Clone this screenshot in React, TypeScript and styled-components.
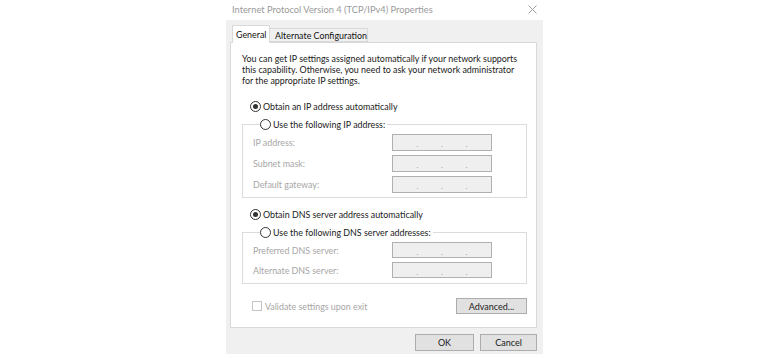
import React from "react";
import styled, { createGlobalStyle } from "styled-components";

const Global = createGlobalStyle`
  html, body { margin: 0; padding: 0; background: #ffffff; }
  body { font-family: Lato, "Noto Sans", sans-serif; font-size: 8.9px; color: #1a1a1a; }
  * { box-sizing: border-box; }
`;

const Window = styled.div`
  width: 317px;
  height: 354px;
  margin-left: 226px;
  display: flex;
  flex-direction: column;
  background: #f0f0f0;
`;

const TitleBar = styled.div`
  height: 20px;
  background: #ffffff;
  display: flex;
  align-items: center;
  justify-content: space-between;
  padding: 0 6px 2px 6px;
`;

const Title = styled.span`
  color: #9a9a9a;
  font-size: 9.3px;
  white-space: nowrap;
`;

const Body = styled.div`
  flex: 1;
  display: flex;
  flex-direction: column;
  padding: 5px 6px 0 4px;
`;

const TabStrip = styled.div`
  height: 17px;
  display: flex;
  align-items: flex-end;
  padding-left: 2px;
`;

const Tab = styled.div<{ $active?: boolean }>`
  height: ${(p) => (p.$active ? "18px" : "14px")};
  margin-bottom: ${(p) => (p.$active ? "-1px" : "0")};
  position: relative;
  z-index: ${(p) => (p.$active ? 1 : 0)};
  width: ${(p) => (p.$active ? "38px" : "98px")};
  background: ${(p) => (p.$active ? "#ffffff" : "#f0f0f0")};
  border: 1px solid #d9d9d9;
  border-bottom: ${(p) => (p.$active ? "none" : "1px solid #d9d9d9")};
  border-left: ${(p) => (p.$active ? "1px solid #d9d9d9" : "none")};
  display: flex;
  align-items: center;
  padding-left: ${(p) => (p.$active ? "3px" : "5px")};
  padding-bottom: ${(p) => (p.$active ? "1px" : "0")};
  white-space: nowrap;
  color: #111;
`;

const Panel = styled.div`
  height: 286px;
  background: #ffffff;
  border: 1px solid #d9d9d9;
  display: flex;
  flex-direction: column;
  padding: 10px 9px 0 11px;
`;

const Intro = styled.p`
  margin: 0;
  line-height: 11px;
  white-space: nowrap;
  color: #1a1a1a;
`;

const RadioRow = styled.label<{ $top: number }>`
  display: flex;
  align-items: center;
  height: 13px;
  margin-top: ${(p) => p.$top}px;
  padding-left: 8px;
  white-space: nowrap;
  color: #1a1a1a;
`;

const RadioDot = styled.span<{ $checked?: boolean }>`
  width: 11px;
  height: 11px;
  border-radius: 50%;
  border: 1px solid #333333;
  background: #ffffff;
  display: inline-flex;
  align-items: center;
  justify-content: center;
  margin-right: 2px;
  flex-shrink: 0;
  &::after {
    content: "";
    display: ${(p) => (p.$checked ? "block" : "none")};
    width: 5px;
    height: 5px;
    border-radius: 50%;
    background: #333333;
  }
`;

const Group = styled.fieldset<{ $top: number; $bottom: number }>`
  margin: ${(p) => p.$top}px 0 0 0;
  padding: 3px 0 ${(p) => p.$bottom}px 10px;
  border: 1px solid #dcdcdc;
  min-width: 0;
  width: 285px;
  display: flex;
  flex-direction: column;
  gap: 4px;
`;

const Legend = styled.legend`
  padding: 0 2px 0 0;
  margin-left: 7px;
  height: 13px;
  display: flex;
  align-items: center;
  white-space: nowrap;
  color: #1a1a1a;
`;

const FieldRow = styled.div<{ $h: number }>`
  display: grid;
  grid-template-columns: 139px 100px;
  align-items: center;
  height: ${(p) => p.$h}px;
`;

const FieldLabel = styled.span`
  color: #a6a6a6;
  white-space: nowrap;
`;

const IpBox = styled.div`
  height: 100%;
  border: 1px solid #b0b0b0;
  background: #efefef;
  display: flex;
  justify-content: center;
  align-items: center;
  gap: 21.5px;
  padding-top: 3px;
`;

const IpDot = styled.span`
  width: 3px;
  text-align: center;
  color: #9a9a9a;
  font-size: 8px;
  line-height: 8px;
`;

const BottomRow = styled.div`
  display: flex;
  justify-content: space-between;
  align-items: center;
  margin-top: 14px;
  height: 16px;
`;

const CheckRow = styled.label`
  display: flex;
  align-items: center;
  gap: 3px;
  padding-left: 10px;
  color: #a6a6a6;
  white-space: nowrap;
`;

const CheckBox = styled.span`
  width: 10px;
  height: 10px;
  border: 1px solid #c4c4c4;
  background: #ffffff;
`;

const Button = styled.button<{ $w: number; $h: number }>`
  width: ${(p) => p.$w}px;
  height: ${(p) => p.$h}px;
  background: #e1e1e1;
  border: 1px solid #adadad;
  font-family: inherit;
  font-size: 9px;
  color: #1a1a1a;
  padding: 0;
  display: flex;
  align-items: center;
  justify-content: center;
`;

const ButtonBar = styled.div`
  display: flex;
  justify-content: flex-end;
  gap: 6px;
  padding-top: 6px;
`;

const CloseIcon = () => (
  <svg width="9" height="9" viewBox="0 0 9 9">
    <path d="M0.5 0.5 L8.5 8.5 M8.5 0.5 L0.5 8.5" stroke="#a0a0a0" strokeWidth="1" fill="none" />
  </svg>
);

const Ip = () => (
  <IpBox>
    <IpDot>.</IpDot>
    <IpDot>.</IpDot>
    <IpDot>.</IpDot>
  </IpBox>
);

export default function App() {
  return (
    <>
      <Global />
      <Window>
        <TitleBar>
          <Title>Internet Protocol Version 4 (TCP/IPv4) Properties</Title>
          <CloseIcon />
        </TitleBar>
        <Body>
          <TabStrip>
            <Tab $active>General</Tab>
            <Tab>Alternate Configuration</Tab>
          </TabStrip>
          <Panel>
            <Intro>
              You can get IP settings assigned automatically if your network supports
              <br />
              this capability. Otherwise, you need to ask your network administrator
              <br />
              for the appropriate IP settings.
            </Intro>
            <RadioRow $top={14}>
              <RadioDot $checked />
              Obtain an IP address automatically
            </RadioRow>
            <Group $top={5} $bottom={4}>
              <Legend>
                <RadioDot />
                Use the following IP address:
              </Legend>
              <FieldRow $h={17}>
                <FieldLabel>IP address:</FieldLabel>
                <Ip />
              </FieldRow>
              <FieldRow $h={17}>
                <FieldLabel>Subnet mask:</FieldLabel>
                <Ip />
              </FieldRow>
              <FieldRow $h={17}>
                <FieldLabel>Default gateway:</FieldLabel>
                <Ip />
              </FieldRow>
            </Group>
            <RadioRow $top={10}>
              <RadioDot $checked />
              Obtain DNS server address automatically
            </RadioRow>
            <Group $top={5} $bottom={5}>
              <Legend>
                <RadioDot />
                Use the following DNS server addresses:
              </Legend>
              <FieldRow $h={16}>
                <FieldLabel>Preferred DNS server:</FieldLabel>
                <Ip />
              </FieldRow>
              <FieldRow $h={16}>
                <FieldLabel>Alternate DNS server:</FieldLabel>
                <Ip />
              </FieldRow>
            </Group>
            <BottomRow>
              <CheckRow>
                <CheckBox />
                Validate settings upon exit
              </CheckRow>
              <Button $w={71} $h={16}>Advanced...</Button>
            </BottomRow>
          </Panel>
          <ButtonBar>
            <Button $w={59} $h={17}>OK</Button>
            <Button $w={57} $h={17}>Cancel</Button>
          </ButtonBar>
        </Body>
      </Window>
    </>
  );
}
